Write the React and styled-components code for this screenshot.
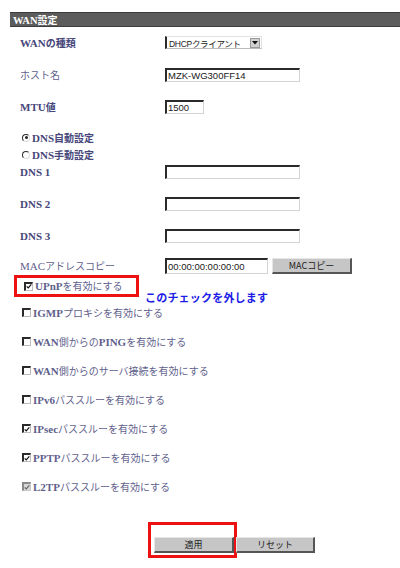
import styled, { createGlobalStyle } from 'styled-components';

const GlobalStyle = createGlobalStyle`
    html, body {
        margin: 0;
        padding: 0;
        background: #ffffff;
    }
    body {
        font-family: "Liberation Serif", "Noto Sans CJK JP", serif;
    }
`;

const Page = styled.div`
    width: 400px;
    height: 568px;
    padding: 12px 0 0 10px;
    box-sizing: border-box;
    overflow: hidden;
`;

const TitleBar = styled.div`
    height: 13px;
    background: #5c5c5c;
    border-top: 1px solid #3c3c3c;
    border-bottom: 1px solid #3c3c3c;
    color: #ffffff;
    font-family: "Liberation Serif", "Noto Sans CJK JP", serif;
    font-weight: bold;
    font-size: 10.5px;
    line-height: 13px;
    padding-left: 3px;
    box-sizing: content-box;
`;

const Form = styled.div`
    display: flex;
    flex-direction: column;
`;

const Row = styled.div`
    display: grid;
    grid-template-columns: 145px 1fr;
    align-items: center;
    height: ${(p) => p.$h}px;
    margin-top: ${(p) => p.$mt || 0}px;
    padding-left: 10px;
`;

const Label = styled.div`
    font-size: 11px;
    line-height: 14px;
    font-weight: ${(p) => (p.$light ? 'normal' : 'bold')};
    color: ${(p) => (p.$light ? '#5f5f8c' : '#46467a')};
    font-family: "Liberation Serif", "Noto Sans CJK JP", serif;
    white-space: nowrap;
`;

const Latin = styled.span`
    font-family: "Liberation Serif", serif;
    font-weight: bold;
`;

const Jp = styled.span`
    font-family: "Noto Sans CJK JP", sans-serif;
    font-size: 10px;
    font-weight: ${(p) => (p.$bold ? 'bold' : 'normal')};
`;

const Field = styled.input`
    width: ${(p) => p.$w}px;
    height: ${(p) => p.$h || 14}px;
    box-sizing: border-box;
    border-style: solid;
    border-width: 2px 1px 1px 2px;
    border-color: #2a2a2a #d4d4d4 #d4d4d4 #2a2a2a;
    padding: 0 1px;
    font-family: "Liberation Sans", "Noto Sans CJK JP", sans-serif;
    font-size: 9.5px;
    color: #222;
    background: #fff;
    outline: none;
`;

const Select = styled.div`
    width: 97px;
    height: 13px;
    box-sizing: border-box;
    display: flex;
    align-items: center;
    justify-content: space-between;
    border-style: solid;
    border-width: 1px 1px 1px 2px;
    border-color: #e2e2e2 #e2e2e2 #bbbbbb #2a2a2a;
    font-family: "Liberation Sans", "Noto Sans CJK JP", sans-serif;
    font-size: 8.5px;
    letter-spacing: -0.3px;
    color: #222;
    padding-left: 2px;
    white-space: nowrap;
`;

const ArrowBox = styled.div`
    width: 10px;
    height: 10px;
    margin-right: 1px;
    background: #d0d0d0;
    border: 1px solid #999;
    box-sizing: border-box;
    display: flex;
    align-items: center;
    justify-content: center;
`;

const Inline = styled.div`
    display: flex;
    align-items: center;
    gap: 4px;
`;

const Button = styled.button`
    width: ${(p) => p.$w}px;
    height: ${(p) => p.$h || 16}px;
    background: #c6c6c6;
    border-style: solid;
    border-width: 1px 2px 2px 1px;
    border-color: #e6e6e6 #555555 #555555 #e6e6e6;
    font-family: "Noto Sans CJK JP", sans-serif;
    font-size: 9px;
    color: #222;
    padding: 0;
    line-height: 1;
    cursor: pointer;
`;

const OptionRow = styled.div`
    display: flex;
    align-items: center;
    height: ${(p) => p.$h}px;
    margin-top: ${(p) => p.$mt || 0}px;
    padding-left: 12px;
    position: relative;
`;

const Box = styled.span`
    width: 9px;
    height: 9px;
    box-sizing: border-box;
    border-style: solid;
    border-width: 2px 1px 1px 2px;
    border-color: ${(p) => (p.$disabled ? '#8a8a8a #c8c8c8 #c8c8c8 #8a8a8a' : '#2a2a2a #bdbdbd #bdbdbd #2a2a2a')};
    background: ${(p) => (p.$disabled ? '#d8d8d8' : '#fff')};
    display: inline-flex;
    align-items: center;
    justify-content: center;
    margin-right: 2px;
    flex-shrink: 0;
`;

const Radio = styled.span`
    width: 8px;
    height: 8px;
    box-sizing: border-box;
    border-radius: 50%;
    border-style: solid;
    border-width: 1px;
    border-color: #2a2a2a #ddd #ddd #2a2a2a;
    display: inline-flex;
    align-items: center;
    justify-content: center;
    margin-right: 2px;
    &::after {
        content: '';
        width: 3px;
        height: 3px;
        border-radius: 50%;
        background: ${(p) => (p.$on ? '#222' : 'transparent')};
    }
`;

const Highlight = styled.div`
    display: flex;
    align-items: center;
    height: 22px;
    width: 125px;
    box-sizing: border-box;
    border: 3px solid #ee1111;
    margin-left: -8px;
    padding-left: 7px;
`;

const Note = styled.div`
    position: absolute;
    left: 135px;
    top: 17px;
    font-family: "Noto Sans CJK JP", sans-serif;
    font-weight: bold;
    font-size: 11px;
    letter-spacing: 0.2px;
    line-height: 13px;
    color: #1c1ce6;
    white-space: nowrap;
`;

const ButtonRow = styled.div`
    display: flex;
    align-items: flex-end;
    margin-top: 21px;
    padding-left: 138px;
`;

const ButtonMark = styled.div`
    border: 3px solid #ee1111;
    padding: 9px 0 2px 3px;
    margin-right: -1px;
`;

const Check = ({ checked, disabled }) => (
    <Box $disabled={disabled}>
        {checked && (
            <svg width="7" height="7" viewBox="0 0 7 7">
                <path d="M0.8 3.4 L2.6 5.2 L6.2 1" fill="none" stroke={disabled ? '#666' : '#111'} strokeWidth="1.4" />
            </svg>
        )}
    </Box>
);

const options = [
    { latin: 'IGMP', jp: 'プロキシを有効にする' },
    { latin: 'WAN', jp: '側からの', latin2: 'PING', jp2: 'を有効にする' },
    { latin: 'WAN', jp: '側からのサーバ接続を有効にする' },
    { latin: 'IPv6', jp: 'パススルーを有効にする' },
    { latin: 'IPsec', jp: 'パススルーを有効にする', checked: true },
    { latin: 'PPTP', jp: 'パススルーを有効にする', checked: true },
    { latin: 'L2TP', jp: 'パススルーを有効にする', checked: true, disabled: true },
];

const App = () => {
    return (
        <Page>
            <GlobalStyle />
            <TitleBar>
                WAN<Jp $bold>設定</Jp>
            </TitleBar>
            <Form>
                <Row $h={31}>
                    <Label>
                        WAN<Jp $bold>の種類</Jp>
                    </Label>
                    <Select>
                        DHCPクライアント
                        <ArrowBox>
                            <svg width="6" height="4" viewBox="0 0 6 4">
                                <path d="M0 0 L6 0 L3 3.5 Z" fill="#111" />
                            </svg>
                        </ArrowBox>
                    </Select>
                </Row>
                <Row $h={33}>
                    <Label $light>
                        <Jp>ホスト名</Jp>
                    </Label>
                    <Field $w={135} readOnly value="MZK-WG300FF14" />
                </Row>
                <Row $h={32}>
                    <Label>
                        MTU<Jp $bold>値</Jp>
                    </Label>
                    <Field $w={39} readOnly value="1500" />
                </Row>
                <OptionRow $h={17} $mt={6}>
                    <Radio $on />
                    <Label>
                        DNS<Jp $bold>自動設定</Jp>
                    </Label>
                </OptionRow>
                <OptionRow $h={17}>
                    <Radio />
                    <Label>
                        DNS<Jp $bold>手動設定</Jp>
                    </Label>
                </OptionRow>
                <Row $h={17}>
                    <Label>DNS 1</Label>
                    <Field $w={135} readOnly value="" />
                </Row>
                <Row $h={17} $mt={15}>
                    <Label>DNS 2</Label>
                    <Field $w={135} readOnly value="" />
                </Row>
                <Row $h={17} $mt={15}>
                    <Label>DNS 3</Label>
                    <Field $w={135} readOnly value="" />
                </Row>
                <Row $h={16} $mt={14}>
                    <Label $light>
                        MAC<Jp>アドレスコピー</Jp>
                    </Label>
                    <Inline>
                        <Field $w={103} $h={16} readOnly value="00:00:00:00:00:00" />
                        <Button $w={80}>MACコピー</Button>
                    </Inline>
                </Row>
                <OptionRow $h={24}>
                    <Highlight>
                        <Check checked />
                        <Label $light>
                            <Latin>UPnP</Latin>
                            <Jp>を有効にする</Jp>
                        </Label>
                    </Highlight>
                    <Note>このチェックを外します</Note>
                </OptionRow>
                {options.map((o) => (
                    <OptionRow $h={29} key={o.latin + o.jp}>
                        <Check checked={o.checked} disabled={o.disabled} />
                        <Label $light>
                            <Latin>{o.latin}</Latin>
                            <Jp>{o.jp}</Jp>
                            {o.latin2 && <Latin>{o.latin2}</Latin>}
                            {o.jp2 && <Jp>{o.jp2}</Jp>}
                        </Label>
                    </OptionRow>
                ))}
                <ButtonRow>
                    <ButtonMark>
                        <Button $w={80}>適用</Button>
                    </ButtonMark>
                    <Button $w={79} style={{ marginBottom: 5 }}>
                        リセット
                    </Button>
                </ButtonRow>
            </Form>
        </Page>
    );
};

export default App;
